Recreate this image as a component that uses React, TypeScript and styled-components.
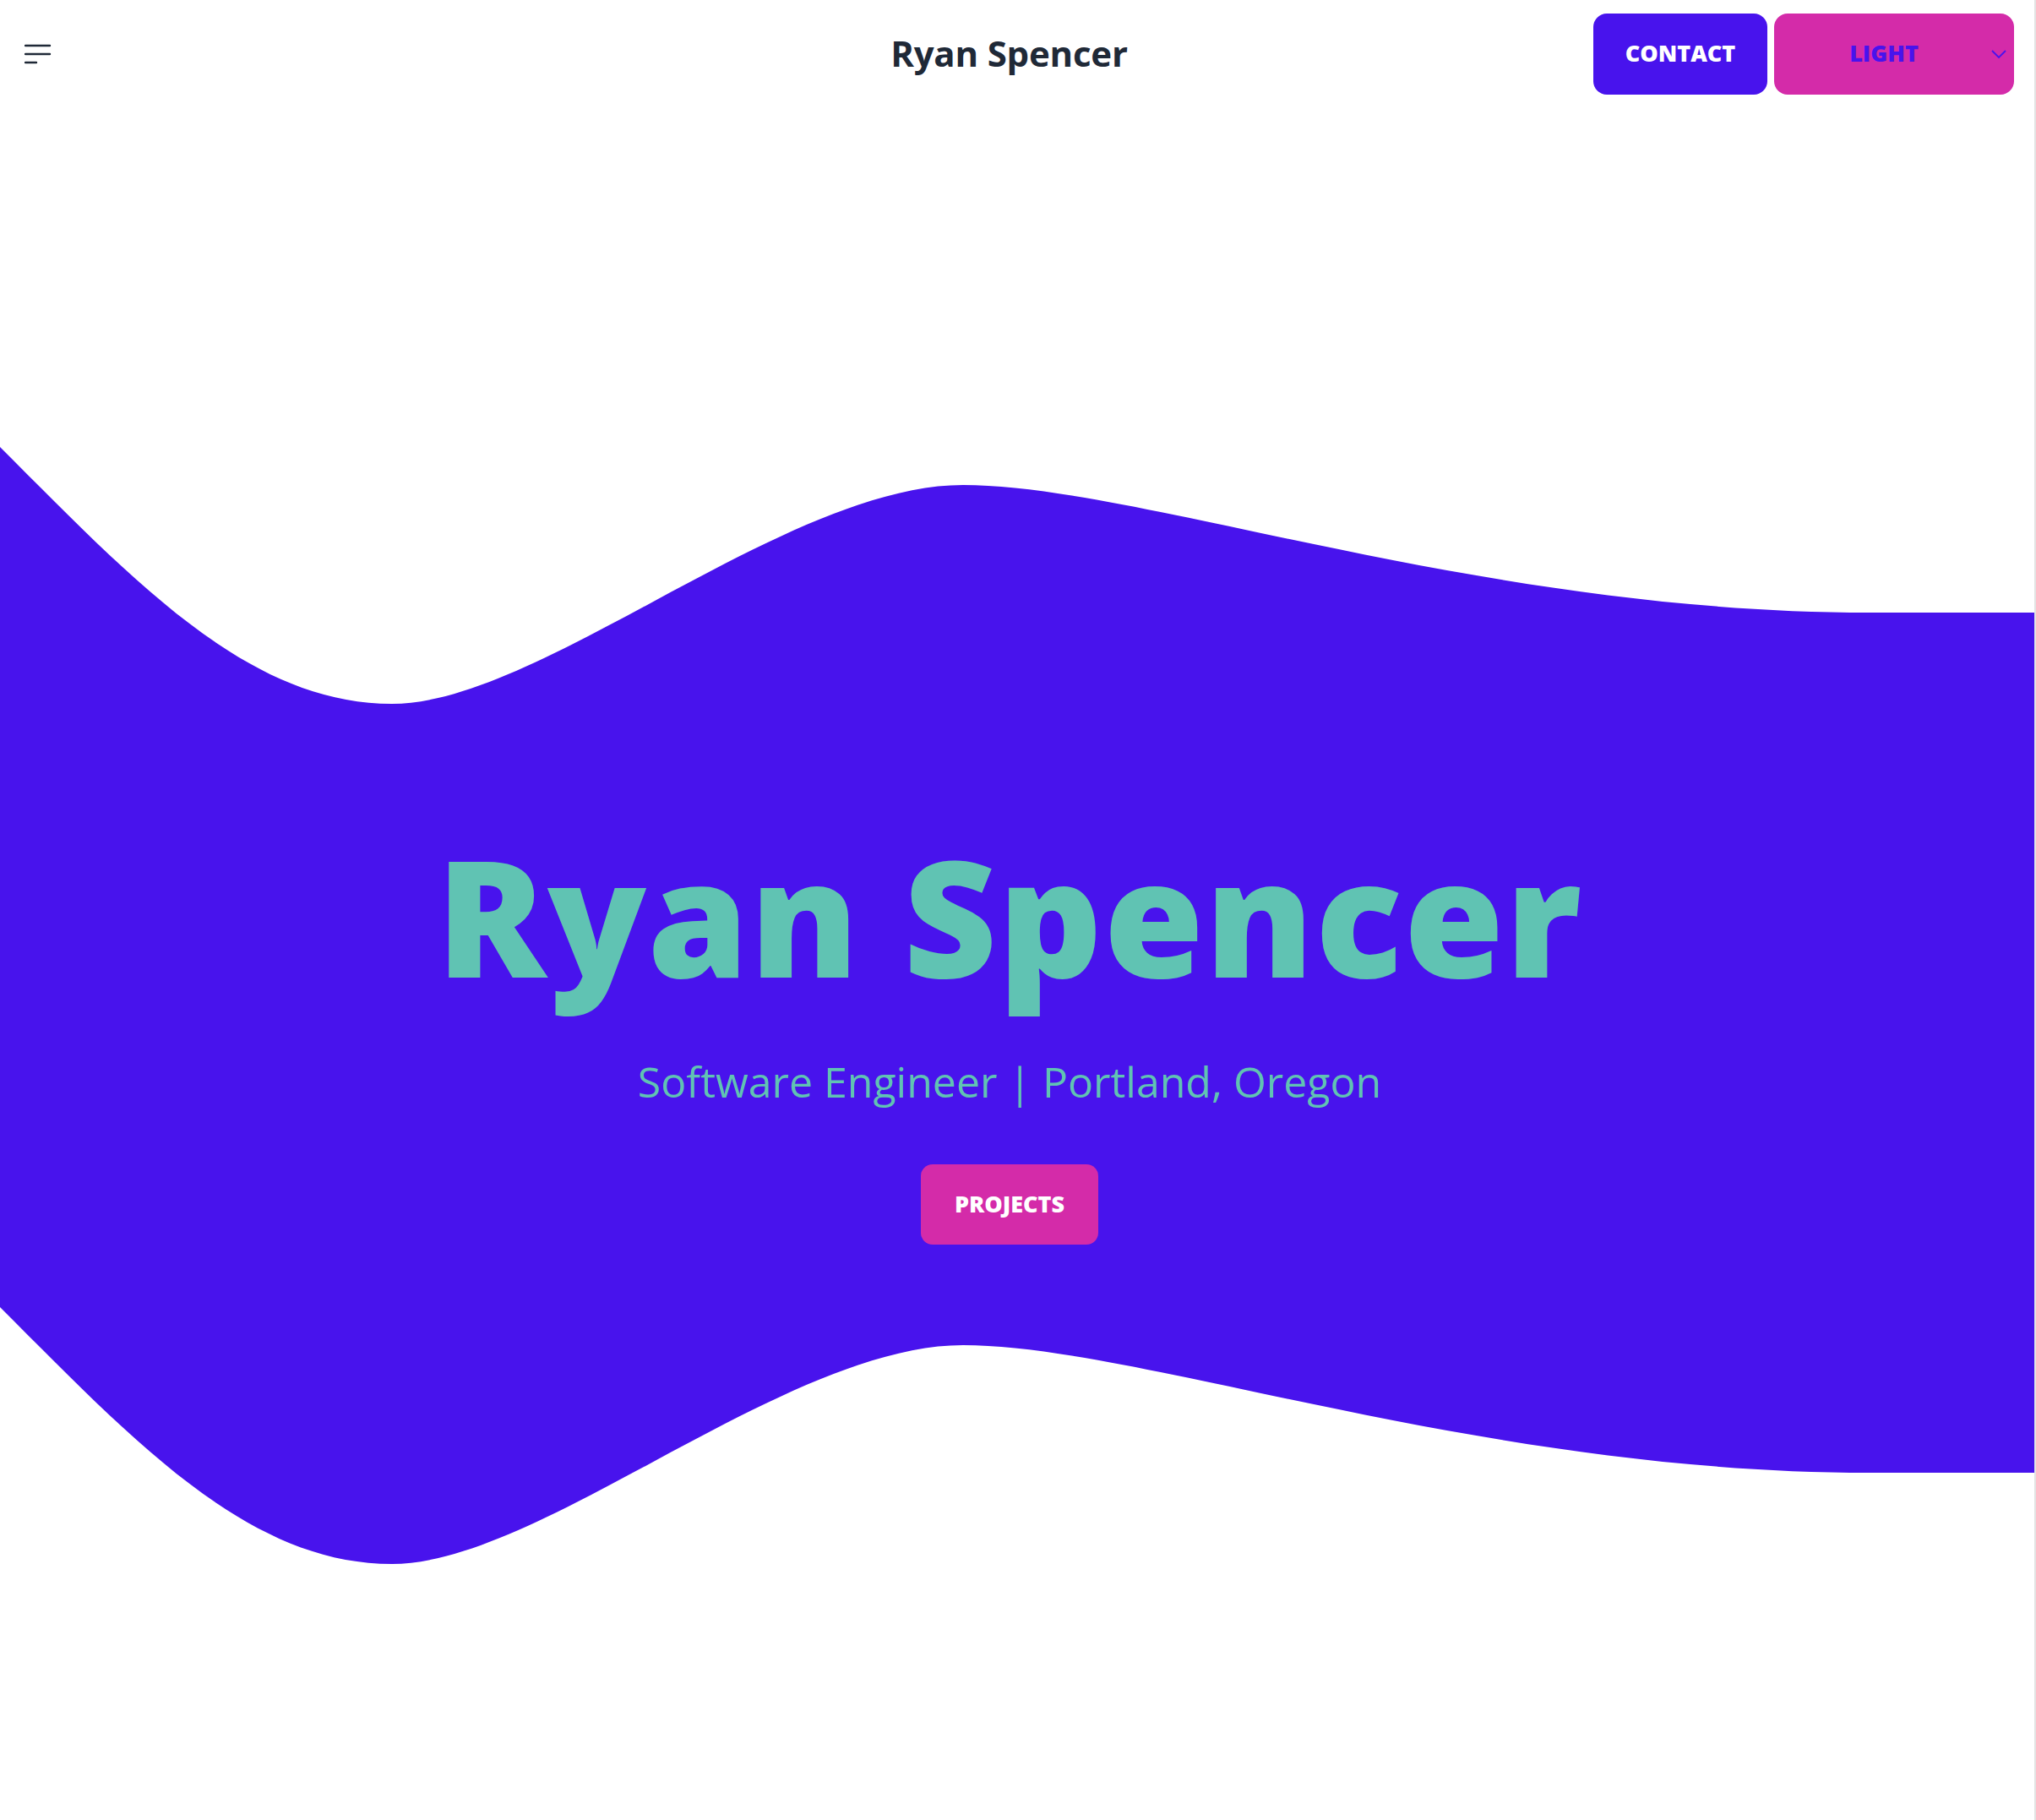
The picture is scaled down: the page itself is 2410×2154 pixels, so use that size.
import React from 'react';
import styled, { createGlobalStyle } from 'styled-components';

const GlobalStyle = createGlobalStyle`
  html, body {
    margin: 0;
    padding: 0;
    background: #fff;
  }
  body {
    font-family: "Open Sans", "Liberation Sans", sans-serif;
  }
`

const PURPLE = '#4813ed';
const MAGENTA = '#d42ba9';
const TEAL = '#60c3b3';
const INK = '#1f2937';

const Page = styled.div`
  width: 2408px;
  min-height: 2154px;
  border-right: 2px solid #e3e3e3;
  overflow: hidden;
`

const Header = styled.header`
  display: grid;
  grid-template-columns: 1fr auto 1fr;
  align-items: center;
  height: 128px;
  padding: 0 24px 0 29px;
  box-sizing: border-box;
`

const MenuButton = styled.button`
  justify-self: start;
  display: flex;
  align-items: center;
  padding: 0;
  border: 0;
  background: none;
  cursor: pointer;
`

const Brand = styled.h1`
  margin: -4px 24px 0 0;
  font-size: 42px;
  font-weight: 700;
  color: ${INK};
  letter-spacing: -0.2px;
`

const Actions = styled.div`
  justify-self: end;
  display: flex;
  gap: 8px;
`

const Button = styled.button<{ $bg: string; $width: number; $color?: string }>`
  display: flex;
  align-items: center;
  justify-content: center;
  width: ${(p) => p.$width}px;
  height: 96px;
  padding: 0 0 3px;
  border: 0;
  border-radius: 16px;
  background: ${(p) => p.$bg};
  color: ${(p) => p.$color || '#fff'};
  font-family: inherit;
  font-size: 27px;
  font-weight: 800;
  text-transform: uppercase;
  cursor: pointer;
`

const Select = styled.div`
  position: relative;
  display: flex;
  align-items: center;
  justify-content: center;
  width: 284px;
  height: 96px;
  padding: 0 24px 3px 0;
  box-sizing: border-box;
  border-radius: 16px;
  background: ${MAGENTA};
  color: ${PURPLE};
  font-size: 27px;
  font-weight: 800;
`

const Chevron = styled.svg`
  position: absolute;
  right: 8px;
  top: 42px;
`

const Hero = styled.section`
  position: relative;
  height: 2026px;
`

const Wave = styled.svg`
  position: absolute;
  left: 0;
  top: 400px;
  width: 100%;
  height: 1330px;
`

const Content = styled.div`
  position: relative;
  display: flex;
  flex-direction: column;
  align-items: center;
  padding: 859px 18px 0 0;
`

const Title = styled.h2`
  margin: 0;
  font-size: 192px;
  line-height: 1;
  font-weight: 800;
  letter-spacing: 1.5px;
  color: ${TEAL};
`

const Subtitle = styled.p`
  margin: 76px 0 0;
  font-size: 50px;
  line-height: 1;
  font-weight: 400;
  color: ${TEAL};
`

const Cta = styled(Button)`
  margin-top: 73px;
  height: 95px;
  border-radius: 14px;
`

const MenuIcon = () => (
  <svg width="32" height="24" viewBox="0 0 32 24" fill="none" stroke={INK} strokeWidth="2.4" strokeLinecap="round">
    <path d="M1 2h29M1 12h29M1 22h13" />
  </svg>
)

export default function App() {
  return (
    <Page>
      <GlobalStyle />
      <Header>
        <MenuButton aria-label="menu">
          <MenuIcon />
        </MenuButton>
        <Brand>Ryan Spencer</Brand>
        <Actions>
          <Button $bg={PURPLE} $width={206}>Contact</Button>
          <Select>
            LIGHT
            <Chevron width="20" height="12" viewBox="0 0 20 12" fill="none" stroke={PURPLE} strokeWidth="1.8">
              <path d="M2 2l8 8 8-8" />
            </Chevron>
          </Select>
        </Actions>
      </Header>
      <Hero>
        <Wave viewBox="0 0 2408 1330" preserveAspectRatio="none">
          <path
            fill={PURPLE}
            d="M0,1 C160,161 294,305 464,305 C640,305 930,46 1140,46 C1350,46 1750,197 2213,197 L2408,197 L2408,1215 L2213,1215 C1750,1215 1350,1064 1140,1064 C930,1064 640,1323 464,1323 C294,1323 160,1179 0,1019 Z"
          />
        </Wave>
        <Content>
          <Title>Ryan Spencer</Title>
          <Subtitle>Software Engineer | Portland, Oregon</Subtitle>
          <Cta $bg={MAGENTA} $width={210}>Projects</Cta>
        </Content>
      </Hero>
    </Page>
  );
}
